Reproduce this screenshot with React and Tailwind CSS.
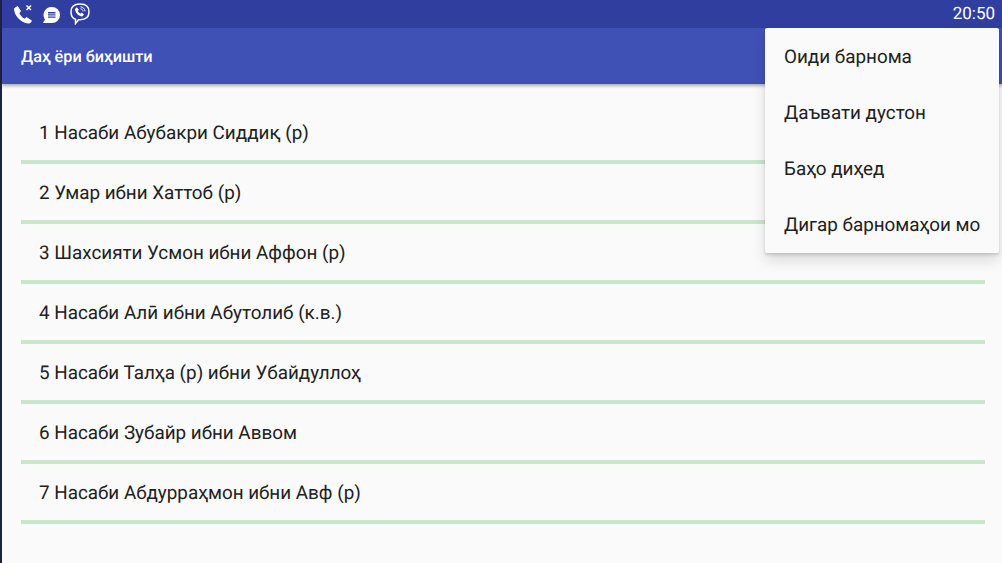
import React from 'react';

const chapters = [
    '1 Насаби Абубакри Сиддиқ (р)',
    '2 Умар ибни Хаттоб (р)',
    '3 Шахсияти Усмон ибни Аффон (р)',
    '4 Насаби Алӣ ибни Абутолиб (к.в.)',
    '5 Насаби Талҳа (р) ибни Убайдуллоҳ',
    '6 Насаби Зубайр ибни Аввом',
    '7 Насаби Абдурраҳмон ибни Авф (р)',
];

const menuItems = ['Оиди барнома', 'Даъвати дустон', 'Баҳо диҳед', 'Дигар барномаҳои мо'];

function StatusIcons() {
    return (
        <div className="flex items-center gap-[9px]">
            <svg width="20" height="20" viewBox="0 0 20 20" className="text-white">
                <path d="M1.500 4.500 4.500 2.500 7.500 7 5.800 9C6.800 11.500 9 14 11.500 15.200L13.300 13.400 18.500 16.800 16.800 19C9 19.500 1.500 12 1.500 4.500Z" fill="currentColor" stroke="currentColor" strokeWidth="1" strokeLinejoin="round" />
                <path d="M13.500 1.500l4.500 4.500M18 1.500 13.500 6" stroke="currentColor" strokeWidth="1.500" fill="none" />
            </svg>
            <svg width="19" height="19" viewBox="0 0 19 19" className="mt-[3px] text-white">
                <path d="M10 1a8 8 0 0 1 0 16H1l1.900-3.600A8 8 0 0 1 10 1Z" fill="currentColor" />
                <path d="M6 6h7.500v1.400H6zM6 8.200h7.500v1.400H6zM6 10.400h7.500v1.400H6z" fill="#303f9f" />
            </svg>
            <svg width="20" height="22" viewBox="0 0 20 22" className="text-white" fill="none">
                <path d="M10 1c5 0 9 1.300 9 7.800s-4 7.900-9 7.900H8.500l-3 3.800V16.300C2 15.300 1 12.300 1 8.800 1 2.300 5 1 10 1Z" stroke="currentColor" strokeWidth="1.500" />
                <path d="M5 6 6.800 4.300 8.800 6.800 7.700 8c.6 1.200 1.500 2.100 2.700 2.700l1.200-1.100 2.400 2-1.700 1.800C8.500 13.300 5.200 10 5 6Z" fill="currentColor" />
                <path d="M10.500 3.800c2.500.2 4.300 2 4.500 4.500M10.500 5.800c1.400.1 2.400 1.100 2.500 2.500" stroke="currentColor" strokeWidth="1" />
            </svg>
        </div>
    );
}

function App() {
    return (
        <div className="relative flex h-[563px] w-[1002px] overflow-hidden bg-[#fafafa] font-['Roboto',sans-serif] [text-rendering:geometricPrecision]">
            <div className="w-[2px] shrink-0 bg-[#1c2340]" />
            <div className="flex min-w-0 flex-1 flex-col">
                <div className="flex h-[28px] items-center justify-between bg-[#303f9f] pl-[11px] pr-[7px] text-white">
                    <StatusIcons />
                    <span className="text-[17px] leading-none">20:50</span>
                </div>
                <div className="flex h-[56px] items-center bg-[#3f51b5] pl-[19px] pt-[3px] shadow-[0_2px_3px_rgba(0,0,0,0.3)]">
                    <span className="text-[16.25px] font-medium text-white">Даҳ ёри биҳишти</span>
                </div>
                <div className="flex flex-col pl-[19px] pr-[17px] pt-[20px]">
                    {chapters.map((title) => (
                        <div key={title} className="flex h-[60px] items-center border-b-[4px] border-[#c8e6c9] pl-[18px] pt-[3px] text-[18.85px] text-[#212121]">
                            {title}
                        </div>
                    ))}
                </div>
            </div>
            <div className="absolute left-[765px] top-[28px] flex h-[225px] w-[234px] flex-col rounded-[2px] bg-[#fafafa] pt-[1px] shadow-[0_2px_3px_rgba(0,0,0,0.14),0_8px_14px_rgba(0,0,0,0.12)]">
                {menuItems.map((item) => (
                    <div key={item} className="flex h-[56px] shrink-0 items-center pl-[19px] text-[18.85px] text-[#212121]">
                        {item}
                    </div>
                ))}
            </div>
        </div>
    );
}

export default App;
